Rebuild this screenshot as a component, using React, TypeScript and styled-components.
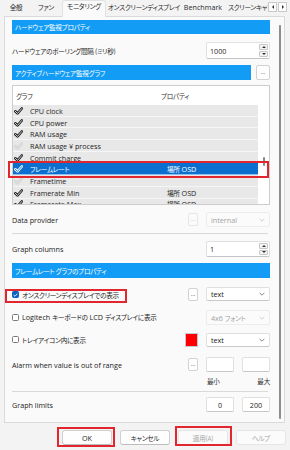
import React from 'react';
import styled, { createGlobalStyle, css } from 'styled-components';

const RED = '#e2262d';
const BLUE = '#139cf5';

const Global = createGlobalStyle`
  html, body { margin: 0; padding: 0; }
  body {
    width: 290px; height: 450px; overflow: hidden;
    background: #f3f3f3;
    font-family: "Open Sans", "Noto Sans CJK JP", sans-serif;
    font-size: 7.2px;
    color: #1f1f1f;
    font-feature-settings: "palt";
  }
  * { box-sizing: border-box; }
`;

/* Japanese runs: Yu Gothic UI is narrower than Noto CJK, so tighten */
const Jp = styled.span`
  font-family: "Noto Sans CJK JP", sans-serif;
  font-size: 6.6px; letter-spacing: -0.25px;
`;

const Window = styled.div`
  width: 290px; height: 450px;
  display: flex; flex-direction: column;
  background: #f3f3f3; overflow: hidden;
`;

const TabStrip = styled.div`
  display: flex; height: 17px; margin-bottom: -1px;
  padding-left: 2px; flex: none;
`;
const TabsViewport = styled.div`
  display: flex; width: 266px; height: 17px;
  overflow: hidden; align-items: flex-start;
`;
const Tab = styled.div<{ $w: number; $active?: boolean; $left?: boolean }>`
  flex: none; width: ${p => p.$w}px; height: 13px; margin-top: 1px;
  line-height: 13px; white-space: nowrap; color: #2b2b2b; overflow: hidden;
  text-align: ${p => (p.$left ? 'left' : 'center')};
  padding-left: ${p => (p.$left ? 4 : 0)}px;
  ${p => p.$active && css`
    height: 17px; margin-top: 0; line-height: 11px;
    background: #fafafa; border: 1px solid #e2e2e2; border-bottom: none;
    border-radius: 3px 3px 0 0; position: relative; z-index: 2;
  `}
`;
const ArrowGroup = styled.div`display: flex; gap: 1px; padding-top: 2px;`;
const ArrowBtn = styled.div<{ $dir: 'left' | 'right' }>`
  width: 9px; height: 10px; border: 1px solid #cacaca; background: #fdfdfd;
  display: flex; align-items: center; justify-content: center;
  &::before {
    content: ''; border-top: 2px solid transparent; border-bottom: 2px solid transparent;
    ${p => (p.$dir === 'left' ? 'border-right: 2px solid #333;' : 'border-left: 2px solid #333;')}
  }
`;

const Panel = styled.div`
  flex: none; margin-left: 4px; width: 281px; height: 407px;
  border: 1px solid #dadada; background: #fafafa;
  display: flex; position: relative; z-index: 1;
`;
const Content = styled.div`
  width: 271px; flex: none; padding: 3px 6px 0 7px;
  display: flex; flex-direction: column;
`;
const ScrollTrack = styled.div`flex: 1; padding: 8px 0 3px 3px; display: flex;`;
const ScrollThumb = styled.div`width: 1.5px; height: 100%; background: #8d8d8d; border-radius: 1px;`;

const SectionHeader = styled.div<{ $h: number; $mt?: number; $grow?: boolean }>`
  height: ${p => p.$h}px; margin-top: ${p => p.$mt ?? 0}px;
  ${p => p.$grow && 'flex: 1;'}
  flex-shrink: 0;
  background: ${BLUE}; color: #fff; padding-left: 3px;
  display: flex; align-items: center; white-space: nowrap;
`;

const FieldRow = styled.div<{ $h: number; $mt: number }>`
  display: flex; align-items: center; flex: none;
  height: ${p => p.$h}px; margin-top: ${p => p.$mt}px;
`;
const Label = styled.div`flex: 1; white-space: nowrap; color: #222;`;
const Controls = styled.div`display: flex; gap: 8px; flex: none; align-items: center; height: 100%;`;

const Spin = styled.div<{ $h: number }>`
  width: 64px; height: ${p => p.$h}px; display: flex;
  background: #fff; border: 1px solid #e0e0e0; border-bottom-color: #c4c4c4; border-radius: 2px;
`;
const SpinText = styled.div`flex: 1; padding-left: 3px; display: flex; align-items: center;`;
const SpinButtons = styled.div`width: 10px; display: flex; flex-direction: column; gap: 1px; padding: 1px 1px 1px 0;`;
const SpinBtn = styled.div<{ $up?: boolean }>`
  flex: 1; border: 1px solid #c6c6c6; background: #f4f4f4; border-radius: 1px;
  display: flex; align-items: center; justify-content: center;
  &::before {
    content: ''; border-left: 2px solid transparent; border-right: 2px solid transparent;
    ${p => (p.$up ? 'border-bottom: 2px solid #333;' : 'border-top: 2px solid #333;')}
  }
`;

const DotsButton = styled.div<{ $h: number; $w?: number; $disabled?: boolean; $ml?: number }>`
  width: ${p => p.$w ?? 10}px; height: ${p => p.$h}px; flex: none;
  margin-left: ${p => p.$ml ?? 0}px;
  border: 1px solid ${p => (p.$disabled ? '#e6e6e6' : '#d2d2d2')};
  border-radius: 2px; background: ${p => (p.$disabled ? '#fbfbfb' : '#fefefe')};
  color: ${p => (p.$disabled ? '#b8b8b8' : '#333')};
  display: flex; align-items: center; justify-content: center;
  font-size: 6px; line-height: 1; padding-bottom: 1px;
`;

const Select = styled.div<{ $h: number; $disabled?: boolean }>`
  width: 64px; height: ${p => p.$h}px; flex: none;
  display: flex; align-items: center; justify-content: space-between;
  padding: 0 4px 0 4px;
  background: ${p => (p.$disabled ? '#fbfbfb' : '#fff')};
  color: ${p => (p.$disabled ? '#a3a3a3' : '#222')};
  border: 1px solid ${p => (p.$disabled ? '#ececec' : '#e0e0e0')};
  border-bottom-color: ${p => (p.$disabled ? '#ececec' : '#c8c8c8')};
  border-radius: 2px; white-space: nowrap;
`;

const TextBox = styled.div<{ $h: number }>`
  width: 28px; height: ${p => p.$h}px; flex: none;
  background: #fff; border: 1px solid #e0e0e0; border-bottom-color: #c8c8c8; border-radius: 2px;
  display: flex; align-items: center; justify-content: center;
`;

const Swatch = styled.div<{ $color: string }>`
  width: 13px; height: 14px; flex: none; background: ${p => p.$color};
  border: 1px solid #c9c9c9;
`;

const CaptionRow = styled.div`
  display: flex; justify-content: flex-end; gap: 8px; height: 10px; margin-top: 4px;
  align-items: center; flex: none;
`;
const Caption = styled.div<{ $align: 'left' | 'right' }>`
  width: 28px; text-align: ${p => p.$align}; color: #333; white-space: nowrap;
  padding-left: ${p => (p.$align === 'left' ? 1 : 0)}px;
`;

const Separator = styled.div<{ $mt: number }>`
  height: 1px; background: #d9d9d9; margin-top: ${p => p.$mt}px; margin-right: 2px; flex: none;
`;

const CheckField = styled.div`
  position: relative; display: inline-flex; align-items: center; gap: 3px; white-space: nowrap;
`;
const Box = styled.span<{ $checked?: boolean }>`
  width: 7px; height: 7px; flex: none; border-radius: 1.5px;
  display: inline-flex; align-items: center; justify-content: center;
  ${p => (p.$checked
    ? css`background: #0a63c2; border: 1px solid #0a63c2;`
    : css`background: #fff; border: 1px solid #7a7a7a;`)}
`;

const Highlight = styled.span<{ $t: number; $r: number; $b: number; $l: number }>`
  position: absolute; pointer-events: none; z-index: 3;
  top: ${p => p.$t}px; right: ${p => p.$r}px; bottom: ${p => p.$b}px; left: ${p => p.$l}px;
  border: 2px solid ${RED};
`;

/* list view */
const ListFrame = styled.div`
  position: relative; height: 120px; margin-top: 5px; flex: none;
  border: 1px solid #cdcdcd; background: #fff;
`;
const ListClip = styled.div`display: flex; height: 100%; overflow: hidden;`;
const ListBody = styled.div`flex: 1; display: flex; flex-direction: column;`;
const ListHead = styled.div`display: flex; align-items: center; height: 19px; flex: none; color: #333;`;
const HeadCell = styled.div<{ $w?: number; $pl: number }>`
  ${p => (p.$w ? `width: ${p.$w}px;` : 'flex: 1;')}
  padding-left: ${p => p.$pl}px; white-space: nowrap;
`;
const ListRow = styled.div<{ $sel?: boolean }>`
  display: flex; align-items: center; height: 11.7px; flex: none;
  background: ${p => (p.$sel ? '#0b6fd0' : '#e8e8e8')};
  color: ${p => (p.$sel ? '#fff' : '#1f1f1f')};
  box-shadow: inset 0 -1px 0 rgba(255, 255, 255, 0.55);
  white-space: nowrap;
`;
const NameCell = styled.div`width: 144px; display: flex; align-items: center; gap: 7px; padding-left: 1px;`;
const PropCell = styled.div`flex: 1; padding-left: 10px;`;
const ListScroll = styled.div`width: 11px; flex: none; padding: 71px 0 0 5px;`;
const ListThumb = styled.div`width: 1.5px; height: 9px; background: #8a8a8a; border-radius: 1px;`;

const Footer = styled.div`
  display: flex; justify-content: flex-end; gap: 8px; padding-right: 4px; margin-top: 7px; flex: none;
`;
const BtnSlot = styled.div`position: relative;`;
const DlgButton = styled.div<{ $disabled?: boolean }>`
  width: 50px; height: 15px; border-radius: 3px;
  display: flex; align-items: center; justify-content: center;
  background: ${p => (p.$disabled ? '#fbfbfb' : '#fefefe')};
  border: 1px solid ${p => (p.$disabled ? '#e5e5e5' : '#d0d0d0')};
  border-bottom-color: ${p => (p.$disabled ? '#e5e5e5' : '#bdbdbd')};
  color: ${p => (p.$disabled ? '#a5a5a5' : '#1f1f1f')};
`;

const Tick = ({ on, sel }: { on: boolean; sel?: boolean }) => {
  const outer = sel ? '#ffffff' : on ? '#1e1e1e' : '#d2d2d2';
  const inner = sel ? '#0b6fd0' : '#e8e8e8';
  const d = 'M1.3 4.3 L3.5 6.4 L7.8 1.5';
  return (
    <svg width="9" height="8" viewBox="0 0 9 8" style={{ flex: 'none' }}>
      <path d={d} fill="none" stroke={outer} strokeWidth="2.6" strokeLinecap="round" strokeLinejoin="round" />
      <path d={d} fill="none" stroke={inner} strokeWidth="0.9" strokeLinecap="round" strokeLinejoin="round" />
    </svg>
  );
};

const Chevron = ({ color }: { color: string }) => (
  <svg width="6" height="4" viewBox="0 0 6 4">
    <path d="M0.6 0.8 L3 3.2 L5.4 0.8" fill="none" stroke={color} strokeWidth="0.8" />
  </svg>
);

const CheckMark = () => (
  <svg width="5" height="4" viewBox="0 0 5 4">
    <path d="M0.6 2 L2 3.3 L4.4 0.7" fill="none" stroke="#fff" strokeWidth="0.9" />
  </svg>
);

type RowData = { name: React.ReactNode; key: string; on: boolean; sel?: boolean; prop?: boolean };
const rows: RowData[] = [
  { key: 'a', name: 'CPU clock', on: true },
  { key: 'b', name: 'CPU power', on: true },
  { key: 'c', name: 'RAM usage', on: true },
  { key: 'd', name: 'RAM usage ¥ process', on: false },
  { key: 'e', name: 'Commit charge', on: true },
  { key: 'f', name: <Jp>フレームレート</Jp>, on: true, sel: true, prop: true },
  { key: 'g', name: 'Frametime', on: false },
  { key: 'h', name: 'Framerate Min', on: true, prop: true },
  { key: 'i', name: 'Framerate Max', on: true, prop: true },
];

const tabs = [
  { t: '全般', w: 28 },
  { t: 'ファン', w: 32 },
  { t: 'モニタリング', w: 44, active: true },
  { t: 'オンスクリーンディスプレイ', w: 76 },
  { t: 'Benchmark', w: 42, latin: true },
  { t: 'スクリーンキャプチャ', w: 60, left: true },
];

export default function App() {
  return (
    <Window>
      <Global />
      <TabStrip>
        <TabsViewport>
          {tabs.map(t => (
            <Tab key={t.t} $w={t.w} $active={t.active} $left={t.left}>
              {t.latin ? t.t : <Jp>{t.t}</Jp>}
            </Tab>
          ))}
        </TabsViewport>
        <ArrowGroup>
          <ArrowBtn $dir="left" />
          <ArrowBtn $dir="right" />
        </ArrowGroup>
      </TabStrip>

      <Panel>
        <Content>
          <SectionHeader $h={14}><Jp>ハードウェア監視プロパティ</Jp></SectionHeader>

          <FieldRow $h={17} $mt={8}>
            <Label><Jp>ハードウェアのポーリング間隔 (ミリ秒)</Jp></Label>
            <Controls>
              <Spin $h={17}>
                <SpinText>1000</SpinText>
                <SpinButtons><SpinBtn $up /><SpinBtn /></SpinButtons>
              </Spin>
            </Controls>
          </FieldRow>

          <FieldRow $h={15} $mt={6}>
            <SectionHeader $h={15} $grow><Jp>アクティブハードウェア監視グラフ</Jp></SectionHeader>
            <DotsButton $h={15} $w={14} $ml={5}>...</DotsButton>
          </FieldRow>

          <ListFrame>
            <ListClip>
              <ListBody>
                <ListHead>
                  <HeadCell $w={144} $pl={3}><Jp>グラフ</Jp></HeadCell>
                  <HeadCell $pl={4}><Jp>プロパティ</Jp></HeadCell>
                </ListHead>
                {rows.map(r => (
                  <ListRow key={r.key} $sel={r.sel}>
                    <NameCell><Tick on={r.on} sel={r.sel} />{r.name}</NameCell>
                    <PropCell>{r.prop && <><Jp>場所</Jp> OSD</>}</PropCell>
                  </ListRow>
                ))}
              </ListBody>
              <ListScroll><ListThumb /></ListScroll>
            </ListClip>
            <Highlight $t={75} $r={0} $b={26} $l={-5} />
          </ListFrame>

          <FieldRow $h={15} $mt={7}>
            <Label>Data provider</Label>
            <Controls>
              <DotsButton $h={13} $disabled>...</DotsButton>
              <Select $h={15} $disabled>internal<Chevron color="#c4c4c4" /></Select>
            </Controls>
          </FieldRow>

          <Separator $mt={6} />

          <FieldRow $h={16} $mt={7}>
            <Label>Graph columns</Label>
            <Controls>
              <Spin $h={16}>
                <SpinText>1</SpinText>
                <SpinButtons><SpinBtn $up /><SpinBtn /></SpinButtons>
              </Spin>
            </Controls>
          </FieldRow>

          <SectionHeader $h={15} $mt={6}><Jp>フレームレート グラフのプロパティ</Jp></SectionHeader>

          <FieldRow $h={14} $mt={9}>
            <Label>
              <CheckField>
                <Box $checked><CheckMark /></Box>
                <Jp>オンスクリーンディスプレイでの表示</Jp>
                <Highlight $t={-1} $r={-8} $b={-3} $l={-7} />
              </CheckField>
            </Label>
            <Controls>
              <DotsButton $h={13}>...</DotsButton>
              <Select $h={14}>text<Chevron color="#666" /></Select>
            </Controls>
          </FieldRow>

          <FieldRow $h={15} $mt={9}>
            <Label>
              <CheckField><Box /><span>Logitech <Jp>キーボードの</Jp> LCD <Jp>ディスプレイに表示</Jp></span></CheckField>
            </Label>
            <Controls>
              <Select $h={15} $disabled><span>4x6 <Jp>フォント</Jp></span><Chevron color="#c4c4c4" /></Select>
            </Controls>
          </FieldRow>

          <FieldRow $h={14} $mt={8}>
            <Label>
              <CheckField><Box /><Jp>トレイアイコン内に表示</Jp></CheckField>
            </Label>
            <Controls>
              <Swatch $color="#ff0000" />
              <Select $h={14}>text<Chevron color="#666" /></Select>
            </Controls>
          </FieldRow>

          <FieldRow $h={15} $mt={10}>
            <Label>Alarm when value is out of range</Label>
            <Controls>
              <DotsButton $h={13}>...</DotsButton>
              <TextBox $h={15} />
              <TextBox $h={15} />
            </Controls>
          </FieldRow>
          <CaptionRow>
            <Caption $align="left"><Jp>最小</Jp></Caption>
            <Caption $align="right"><Jp>最大</Jp></Caption>
          </CaptionRow>

          <Separator $mt={5} />

          <FieldRow $h={15} $mt={5}>
            <Label>Graph limits</Label>
            <Controls>
              <TextBox $h={15}>0</TextBox>
              <TextBox $h={15}>200</TextBox>
            </Controls>
          </FieldRow>
        </Content>
        <ScrollTrack><ScrollThumb /></ScrollTrack>
      </Panel>

      <Footer>
        <BtnSlot>
          <DlgButton>OK</DlgButton>
          <Highlight $t={-3} $r={-3} $b={-2} $l={-5} />
        </BtnSlot>
        <BtnSlot><DlgButton><Jp>キャンセル</Jp></DlgButton></BtnSlot>
        <BtnSlot>
          <DlgButton $disabled><Jp>適用(A)</Jp></DlgButton>
          <Highlight $t={-4} $r={-4} $b={-1} $l={-3} />
        </BtnSlot>
        <BtnSlot><DlgButton $disabled><Jp>ヘルプ</Jp></DlgButton></BtnSlot>
      </Footer>
    </Window>
  );
}
